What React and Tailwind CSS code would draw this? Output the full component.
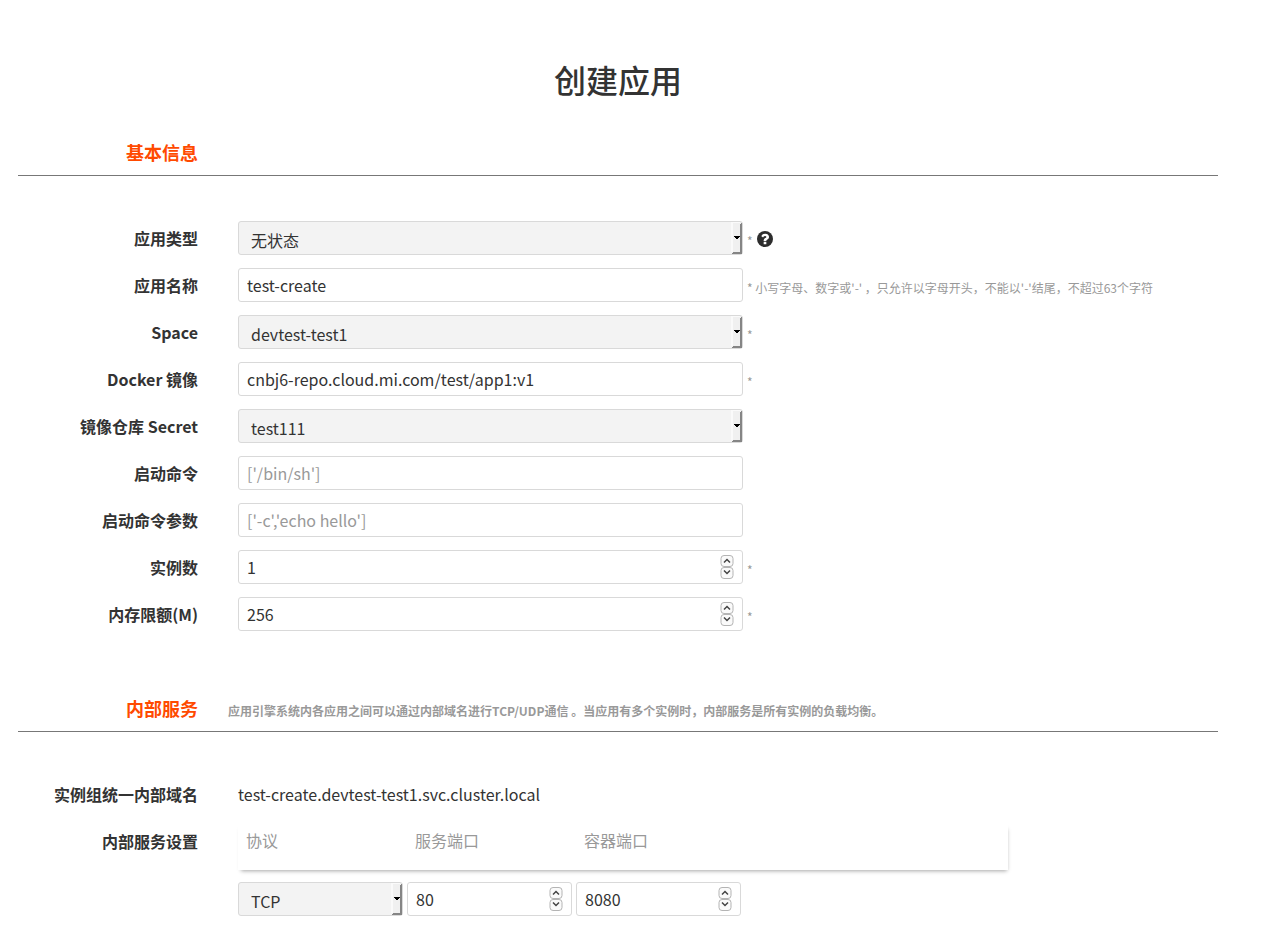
import React, { useState } from 'react';

const Star = () => <span className="ml-1 pt-1.5 text-xs text-[#999]">*</span>;

const SelectBox = ({ id, label, options, className = 'w-[505px]' }) => {
  const [value, setValue] = useState(options[0]);

  return (
    <div className={`relative shrink-0 ${className}`}>
      <select
        id={id}
        aria-label={label}
        value={value}
        onChange={(e) => setValue(e.target.value)}
        className="block h-[34px] w-full appearance-none rounded-[3px] border border-[#d9d9d9] bg-[#f3f3f3] pl-3 pr-4 pt-1 text-base leading-6 text-[#333] focus:outline-none"
      >
        {options.map((o) => (
          <option key={o} value={o}>{o}</option>
        ))}
      </select>
      <svg
        className="pointer-events-none absolute right-px top-0"
        width="11"
        height="34"
        viewBox="0 0 11 34"
        shapeRendering="crispEdges"
        aria-hidden="true"
      >
        <path d="M1 2h8v30H1z" fill="#f0f0f0" />
        <path d="M0 1h9v1H2v29H0z" fill="#fafafa" />
        <path d="M9 3l2-2v31l-1 1H1l1-2h7z" fill="#858585" />
        <path d="M3 15h6v1H3zM4 16h4v1H4zM5 17h2v1H5z" fill="#000" />
      </svg>
    </div>
  );
};

const TextBox = ({ id, initial = '', placeholder }) => {
  const [value, setValue] = useState(initial);

  return (
    <input
      id={id}
      type="text"
      value={value}
      placeholder={placeholder}
      onChange={(e) => setValue(e.target.value)}
      className="h-[34px] w-[505px] shrink-0 rounded-[3px] border border-[#d9d9d9] bg-white px-2 text-base text-[#333] placeholder:text-[#999] focus:border-[#aaa] focus:outline-none"
    />
  );
};

const StepIcon = ({ d }) => (
  <svg width="14" height="12" viewBox="0 0 14 12" fill="none" aria-hidden="true">
    <rect x="1" y="0.5" width="12" height="11" rx="3" fill="#fafafa" stroke="#b4b4b4" />
    <path d={d} stroke="#444" strokeWidth="1.5" />
  </svg>
);

const NumberBox = ({ id, label, initial, className = 'w-[505px]' }) => {
  const [value, setValue] = useState(initial);

  return (
    <div className={`relative shrink-0 ${className}`}>
      <input
        id={id}
        type="number"
        aria-label={label}
        value={value}
        onChange={(e) => setValue(e.target.value)}
        className="block h-[34px] w-full appearance-none rounded-[3px] border border-[#d9d9d9] bg-white pl-2 pr-6 text-base text-[#333] focus:border-[#aaa] focus:outline-none [-moz-appearance:textfield] [&::-webkit-inner-spin-button]:appearance-none"
      />
      <div className="absolute inset-y-0 right-[9px] flex flex-col justify-center">
        <button type="button" aria-label="+" onClick={() => setValue(Number(value) + 1)}>
          <StepIcon d="M4 7.5L7 4.5l3 3" />
        </button>
        <button type="button" aria-label="-" onClick={() => setValue(Number(value) - 1)}>
          <StepIcon d="M4 3.5L7 6.5L10 3.5" />
        </button>
      </div>
    </div>
  );
};

const Row = ({ label, htmlFor, top, children }) => (
  <div className={`flex ${top ? 'items-start' : 'items-center'}`}>
    {htmlFor ? (
      <label htmlFor={htmlFor} className="w-[15%] shrink-0 text-right font-bold leading-[34px]">{label}</label>
    ) : (
      <div className="w-[15%] shrink-0 text-right font-bold leading-[34px]">{label}</div>
    )}
    <div className="ml-10 flex min-w-0 flex-1 items-center">{children}</div>
  </div>
);

const SectionTitle = ({ title, note }) => (
  <div className="flex items-center border-b border-[#777] pb-[9px]">
    <h2 className="w-[15%] shrink-0 text-right text-lg font-bold text-[#ff4a00]">{title}</h2>
    {note && <span className="ml-[30px] pt-1.5 text-xs font-bold text-[#999]">{note}</span>}
  </div>
);

const headCell = 'w-[169px] px-2 pb-[15px] pt-px text-left font-normal leading-[30px] text-[#999]';

const App = () => {
  return (
    <main className="bg-white pb-4 pl-[18px] pr-[60px] font-['Noto_Sans_CJK_SC',sans-serif] text-base text-[#333]">
      <h1 className="pt-[55px] text-center text-[32px] font-medium leading-[48px]">创建应用</h1>

      <form onSubmit={(e) => e.preventDefault()}>
        <section className="pt-[35px]">
          <SectionTitle title="基本信息" />
          <div className="flex flex-col gap-[13px] pt-[45px]">
            <Row label="应用类型" htmlFor="type">
              <SelectBox id="type" options={['无状态', '有状态']} />
              <Star />
              <button type="button" aria-label="应用类型" className="ml-1 pt-0.5">
                <svg width="16" height="16" viewBox="0 0 1536 1536" aria-hidden="true">
                  <circle cx="768" cy="768" r="768" fill="#2d2d2d" />
                  <path
                    fill="#fff"
                    d="M896 1248v-192q0-14-9-23t-23-9H672q-14 0-23 9t-9 23v192q0 14 9 23t23 9h192q14 0 23-9t9-23zm256-672q0-88-55.500-163T958 297t-170-41q-243 0-371 213-15 24 8 42l132 100q7 6 19 6 16 0 25-12 53-68 86-92 34-24 86-24 48 0 85.500 26t37.500 59q0 38-20 61t-68 45q-63 28-115.500 86.500T640 892v36q0 14 9 23t23 9h192q14 0 23-9t9-23q0-19 21.500-49.500T972 829q32-18 49-28.500t46-35 44.500-48 28-60.500 12.500-81z"
                  />
                </svg>
              </button>
            </Row>
            <Row label="应用名称" htmlFor="name">
              <TextBox id="name" initial="test-create" />
              <span className="ml-1 pt-1.5 text-xs text-[#999]">* 小写字母、数字或'-' ，只允许以字母开头，不能以'-'结尾，不超过63个字符</span>
            </Row>
            <Row label="Space" htmlFor="space">
              <SelectBox id="space" options={['devtest-test1']} />
              <Star />
            </Row>
            <Row label="Docker 镜像" htmlFor="image">
              <TextBox id="image" initial="cnbj6-repo.cloud.mi.com/test/app1:v1" />
              <Star />
            </Row>
            <Row label="镜像仓库 Secret" htmlFor="secret">
              <SelectBox id="secret" options={['test111']} />
            </Row>
            <Row label="启动命令" htmlFor="command">
              <TextBox id="command" placeholder="['/bin/sh']" />
            </Row>
            <Row label="启动命令参数" htmlFor="args">
              <TextBox id="args" placeholder="['-c','echo hello']" />
            </Row>
            <Row label="实例数" htmlFor="replicas">
              <NumberBox id="replicas" initial={1} />
              <Star />
            </Row>
            <Row label="内存限额(M)" htmlFor="memory">
              <NumberBox id="memory" initial={256} />
              <Star />
            </Row>
          </div>
        </section>

        <section className="pt-[63px]">
          <SectionTitle title="内部服务" note="应用引擎系统内各应用之间可以通过内部域名进行TCP/UDP通信 。当应用有多个实例时，内部服务是所有实例的负载均衡。" />
          <div className="flex flex-col gap-[13px] pt-[45px]">
            <Row label="实例组统一内部域名">
              <span>test-create.devtest-test1.svc.cluster.local</span>
            </Row>
            <Row label="内部服务设置" top>
              <table className="w-[770px] table-fixed border-separate border-spacing-0">
                <thead>
                  <tr className="shadow-[1px_3px_4px_-2px_rgba(0,0,0,0.35)]">
                    <th className={headCell}>协议</th>
                    <th className={headCell}>服务端口</th>
                    <th className={headCell}>容器端口</th>
                    <td />
                  </tr>
                </thead>
                <tbody>
                  <tr>
                    <td className="pr-1 pt-3"><SelectBox label="协议" options={['TCP', 'UDP']} className="w-full" /></td>
                    <td className="pr-1 pt-3"><NumberBox label="服务端口" initial={80} className="w-full" /></td>
                    <td className="pr-1 pt-3"><NumberBox label="容器端口" initial={8080} className="w-full" /></td>
                    <td />
                  </tr>
                </tbody>
              </table>
            </Row>
          </div>
        </section>
      </form>
    </main>
  );
};

export default App;
